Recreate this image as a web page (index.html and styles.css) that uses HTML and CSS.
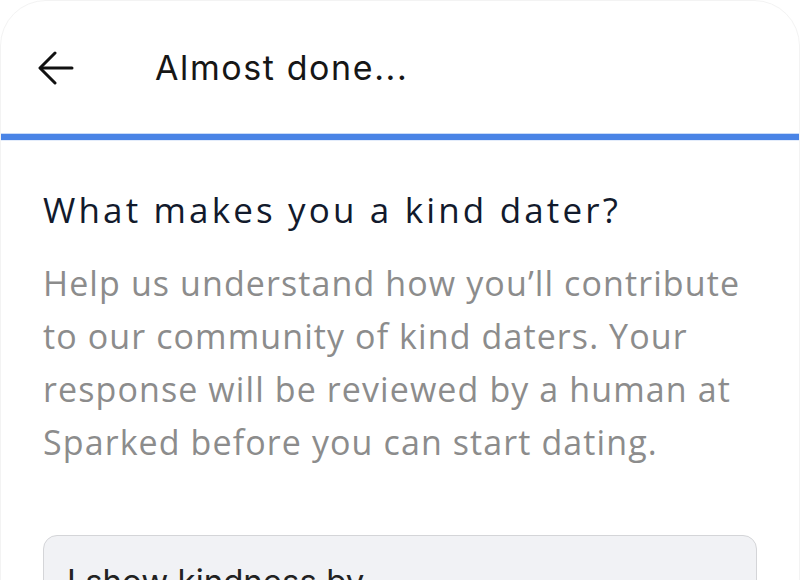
FILE: index.html
```html
<!DOCTYPE html>
<html lang="en">
<head>
<meta charset="utf-8">
<title>Almost done...</title>
<link rel="stylesheet" href="styles.css">
</head>
<body>
<div class="screen">
  <header class="topbar">
    <button class="back" aria-label="Back">
      <svg width="36" height="34" viewBox="0 0 36 34" fill="none" stroke="#111" stroke-width="3" stroke-linecap="round" stroke-linejoin="round">
        <path d="M34 17H3"/>
        <path d="M17 2L2 17L17 32"/>
      </svg>
    </button>
    <h1 class="title">Almost done...</h1>
  </header>
  <div class="progress"></div>
  <main class="content">
    <h2 class="question">What makes you a kind dater?</h2>
    <p class="desc">Help us understand how you’ll contribute<br>to our community of kind daters. Your<br>response will be reviewed by a human at<br>Sparked before you can start dating.</p>
    <div class="field">
      <span class="placeholder">I show kindness by...</span>
    </div>
  </main>
</div>
</body>
</html>
```

FILE: styles.css
```css
html, body {
  margin: 0;
  padding: 0;
  background: #ffffff;
  overflow: hidden;
}
.screen {
  width: 800px;
  height: 640px;
  box-sizing: border-box;
  border: 1px solid #f3f3f3;
  border-radius: 46px 46px 0 0;
  background: #fff;
}
.topbar {
  height: 133px;
  display: flex;
  align-items: center;
  padding-left: 37px;
  box-sizing: border-box;
}
.back {
  border: 0;
  background: none;
  padding: 0;
  width: 36px;
  height: 34px;
  display: flex;
}
.title {
  margin: 0 0 0 81px;
  font-family: Inter, "Liberation Sans", sans-serif;
  font-weight: 400;
  font-size: 34px;
  color: #161616;
  letter-spacing: 1.6px;
}
.progress {
  height: 6px;
  background: #4a84e6;
  box-shadow: 0 -1px 0 #c9dbf8, 0 1px 0 #e3ecfb;
}
.content {
  padding: 50px 43px 0 42px;
}
.question {
  margin: 0;
  font-family: "Open Sans", sans-serif;
  font-weight: 500;
  font-size: 35px;
  letter-spacing: 3.15px;
  color: #121a2c;
  line-height: 40px;
}
.desc {
  margin: 27px 0 0;
  font-family: "Open Sans", sans-serif;
  font-size: 34px;
  letter-spacing: 1.1px;
  line-height: 53px;
  color: #8c8c8c;
  white-space: nowrap;
}
.field {
  margin-top: 66px;
  width: 714px;
  height: 120px;
  box-sizing: border-box;
  border: 1.5px solid #d4d5d8;
  border-radius: 14px;
  background: #f1f2f5;
  padding: 25px 23px;
}
.placeholder {
  font-family: Inter, sans-serif;
  font-size: 33px;
  color: #222;
}
```
